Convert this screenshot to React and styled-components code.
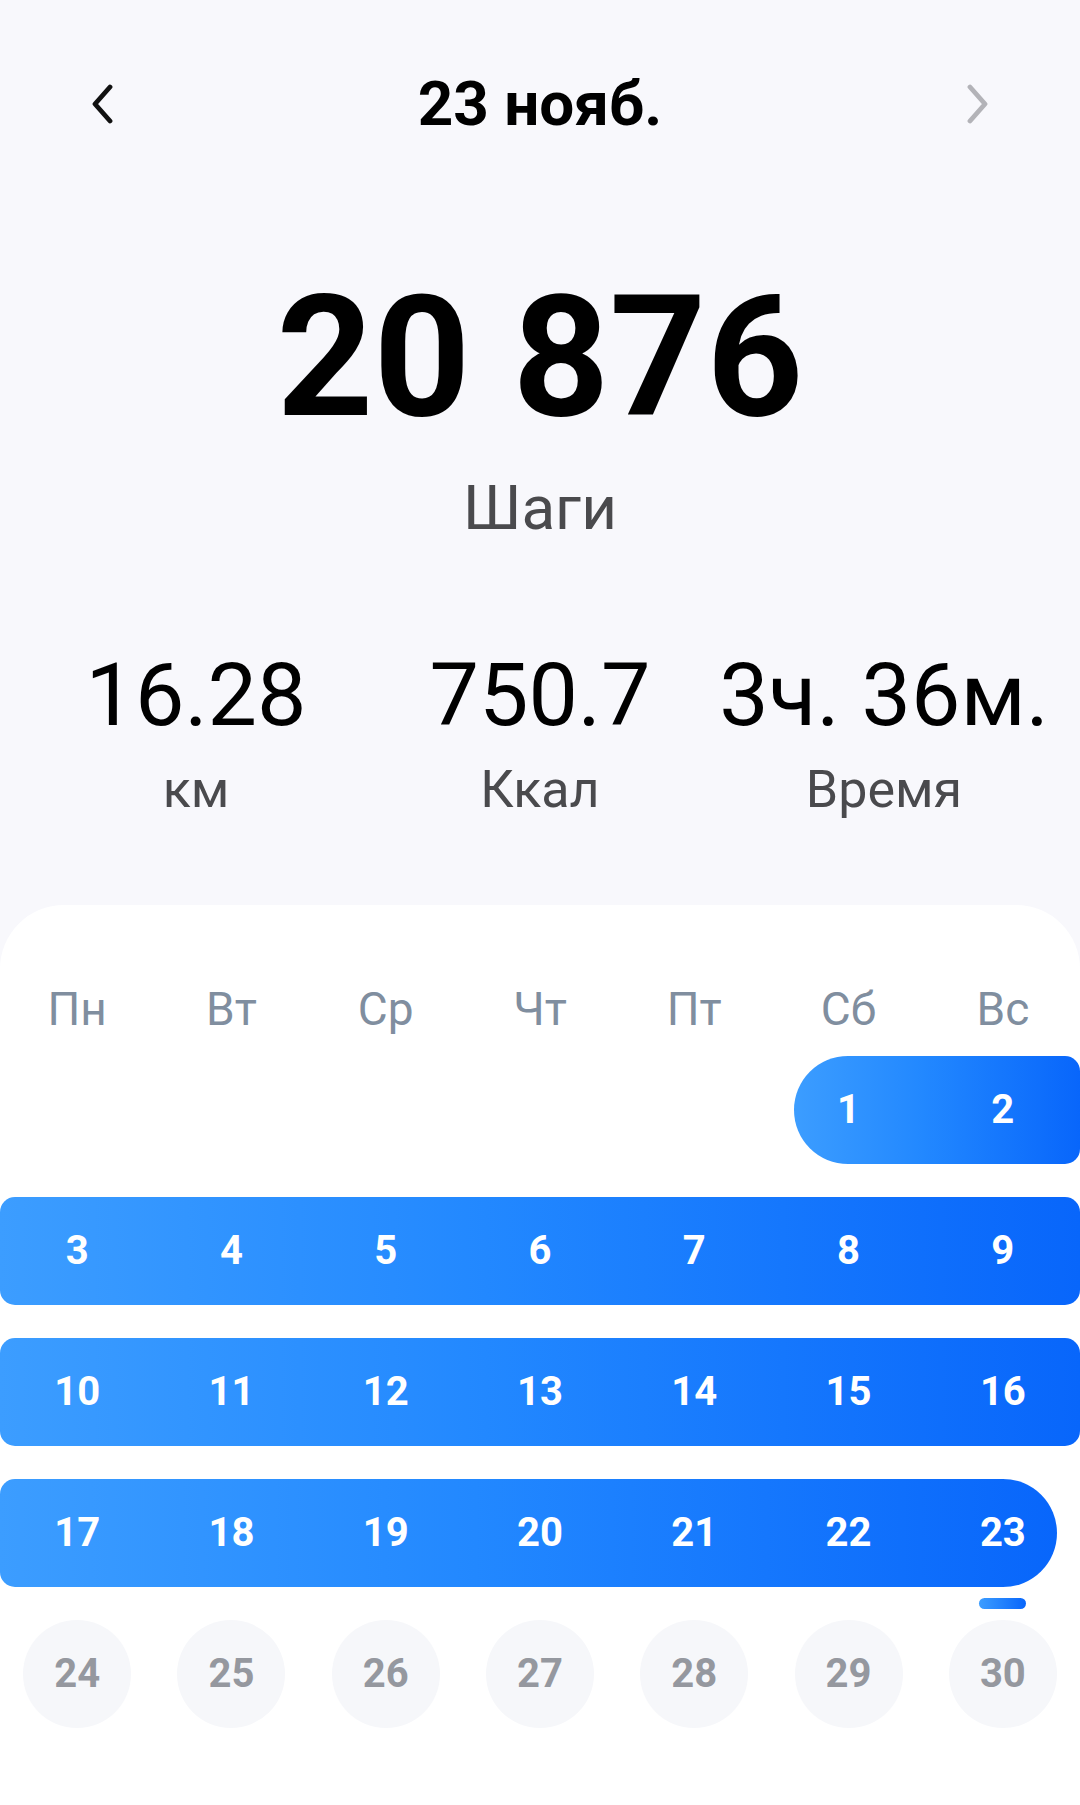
import React from 'react'
import styled, { createGlobalStyle } from 'styled-components'

const GlobalStyle = createGlobalStyle`
  html, body {
    margin: 0;
    padding: 0;
    background: #f8f8fc;
    font-family: Roboto, "Noto Sans", "Liberation Sans", sans-serif;
  }
  * {
    box-sizing: border-box;
  }
`

const Page = styled.div`
  width: 1080px;
  min-height: 1805px;
  display: flex;
  flex-direction: column;
  background: #f8f8fc;
`

const Nav = styled.div`
  margin-top: 56px;
  height: 96px;
  padding: 0 90px;
  display: flex;
  align-items: center;
  justify-content: space-between;
`

const NavTitle = styled.h1`
  margin: 0;
  font-size: 62px;
  line-height: 1;
  font-weight: 700;
  color: #000;
`

const ArrowButton = styled.button`
  width: 24px;
  height: 40px;
  padding: 0;
  border: none;
  background: none;
  display: flex;
  color: ${(p) => (p.disabled ? '#b3b3b8' : '#111')};
`

const Steps = styled.div`
  margin-top: 121px;
  text-align: center;
  font-size: 169px;
  line-height: 1;
  font-weight: 700;
  color: #000;
`

const StepsLabel = styled.div`
  margin-top: 35px;
  text-align: center;
  font-size: 62px;
  line-height: 1;
  color: #4a4a4d;
`

const Stats = styled.div`
  margin-top: 112px;
  padding: 0 24px;
  display: grid;
  grid-template-columns: repeat(3, 1fr);
`

const Stat = styled.div`
  display: flex;
  flex-direction: column;
  align-items: center;
  gap: 25px;
`

const StatValue = styled.div`
  font-size: 88px;
  line-height: 1;
  color: #000;
  white-space: nowrap;
`

const StatLabel = styled.div`
  font-size: 52px;
  line-height: 1;
  color: #4a4a4d;
`

const Card = styled.div`
  margin-top: 89px;
  flex: 1;
  background: #fff;
  border-radius: 64px 64px 0 0;
  padding-top: 81px;
  display: flex;
  flex-direction: column;
`

const WeekDays = styled.div`
  display: grid;
  grid-template-columns: repeat(7, 1fr);
  margin-bottom: 24px;
`

const WeekDay = styled.div`
  text-align: center;
  font-size: 46px;
  line-height: 1;
  color: #808e9f;
`

const Weeks = styled.div`
  display: flex;
  flex-direction: column;
  gap: 33px;
`

const Week = styled.div`
  display: grid;
  grid-template-columns: repeat(7, 1fr);
  grid-template-rows: 108px;
`

const Range = styled.div`
  grid-row: 1;
  grid-column: ${(p) => p.from} / ${(p) => p.to + 1};
  margin-left: ${(p) => (p.roundStart ? '23px' : '0')};
  margin-right: ${(p) => (p.roundEnd ? '23px' : '0')};
  border-radius: ${(p) => (p.roundStart ? '54px' : '15px')} ${(p) => (p.roundEnd ? '54px' : '15px')}
    ${(p) => (p.roundEnd ? '54px' : '15px')} ${(p) => (p.roundStart ? '54px' : '15px')};
  background: linear-gradient(90deg, #3c9dff 0%, #2288ff 45%, #0866fb 100%);
`

const Day = styled.div`
  grid-row: 1;
  grid-column: ${(p) => p.col};
  position: relative;
  display: flex;
  align-items: center;
  justify-content: center;
  z-index: 1;
`

const DayNum = styled.span`
  width: 108px;
  height: 108px;
  border-radius: 50%;
  display: flex;
  align-items: center;
  justify-content: center;
  font-size: 40px;
  line-height: 1;
  font-weight: 700;
  color: ${(p) => (p.active ? '#fff' : '#95989f')};
  background: ${(p) => (p.active ? 'transparent' : '#f6f7fa')};
`

const Today = styled.span`
  position: absolute;
  top: calc(100% + 11px);
  left: 50%;
  width: 47px;
  height: 11px;
  margin-left: -23.5px;
  border-radius: 6px;
  background: linear-gradient(90deg, #3c9dff, #0866fb);
`

function Chevron({ dir }) {
  const d = dir === 'left' ? 'M20 3 L5 20 L20 37' : 'M4 3 L19 20 L4 37'
  return (
    <svg width="24" height="40" viewBox="0 0 24 40" fill="none">
      <path d={d} stroke="currentColor" strokeWidth="4.8" strokeLinecap="round" strokeLinejoin="round" />
    </svg>
  )
}

const days = ['Пн', 'Вт', 'Ср', 'Чт', 'Пт', 'Сб', 'Вс']

// November: starts on Saturday, progress up to the 23rd
const weeks = [
  { start: 6, days: [1, 2] },
  { start: 1, days: [3, 4, 5, 6, 7, 8, 9] },
  { start: 1, days: [10, 11, 12, 13, 14, 15, 16] },
  { start: 1, days: [17, 18, 19, 20, 21, 22, 23] },
  { start: 1, days: [24, 25, 26, 27, 28, 29, 30] },
]

const firstDay = 1
const today = 23

function App() {
  return (
    <Page>
      <GlobalStyle />
      <Nav>
        <ArrowButton>
          <Chevron dir="left" />
        </ArrowButton>
        <NavTitle>23 нояб.</NavTitle>
        <ArrowButton disabled>
          <Chevron dir="right" />
        </ArrowButton>
      </Nav>

      <Steps>20 876</Steps>
      <StepsLabel>Шаги</StepsLabel>

      <Stats>
        <Stat>
          <StatValue>16.28</StatValue>
          <StatLabel>км</StatLabel>
        </Stat>
        <Stat>
          <StatValue>750.7</StatValue>
          <StatLabel>Ккал</StatLabel>
        </Stat>
        <Stat>
          <StatValue>3ч. 36м.</StatValue>
          <StatLabel>Время</StatLabel>
        </Stat>
      </Stats>

      <Card>
        <WeekDays>
          {days.map((d) => (
            <WeekDay key={d}>{d}</WeekDay>
          ))}
        </WeekDays>
        <Weeks>
          {weeks.map((w, i) => {
            const active = w.days.filter((n) => n <= today)
            const from = w.start
            const to = w.start + active.length - 1
            return (
              <Week key={i}>
                {active.length > 0 && (
                  <Range
                    from={from}
                    to={to}
                    roundStart={active[0] === firstDay}
                    roundEnd={active[active.length - 1] === today}
                  />
                )}
                {w.days.map((n, j) => (
                  <Day key={n} col={w.start + j}>
                    <DayNum active={n <= today}>{n}</DayNum>
                    {n === today && <Today />}
                  </Day>
                ))}
              </Week>
            )
          })}
        </Weeks>
      </Card>
    </Page>
  )
}

export default App
